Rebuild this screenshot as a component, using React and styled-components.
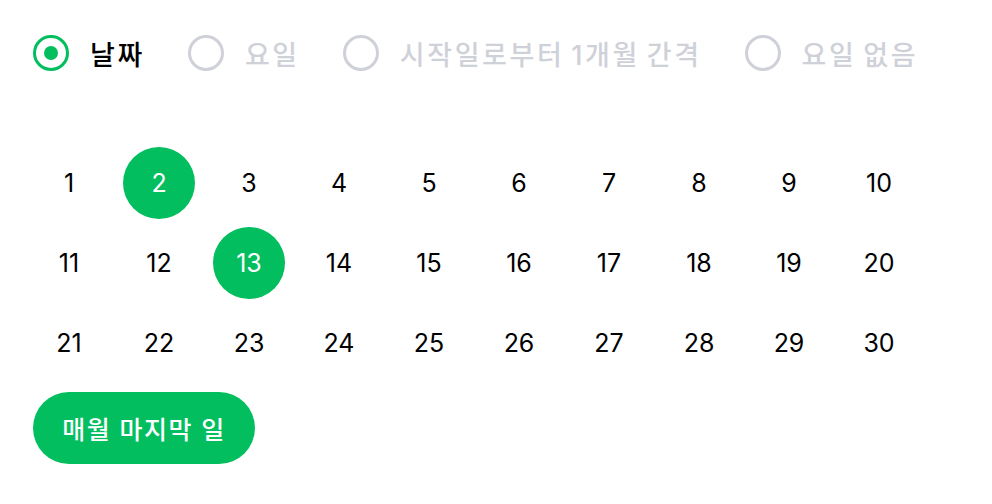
import React from "react";
import styled, { createGlobalStyle } from "styled-components";

const GREEN = "#02BE5F";
const GRAY = "#CFD1D9";

const Global = createGlobalStyle`
  html, body { margin: 0; padding: 0; background: #fff; }
  body { font-family: Inter, "Noto Sans CJK KR", sans-serif; color: #000; }
`;

const Page = styled.div`
  padding: 35px 0 0 33px;
`;

const RadioRow = styled.div`
  display: flex;
  align-items: center;
  gap: 43px;
  height: 36px;
`;

const RadioItem = styled.label`
  display: flex;
  align-items: center;
  gap: 21px;
  font-family: Inter, "Noto Sans CJK KR", sans-serif;
  font-size: 27px;
  letter-spacing: 2.6px;
  word-spacing: -3px;
  font-weight: 500;
  color: ${(p) => (p.$checked ? "#000" : GRAY)};
`;

const Ring = styled.span`
  box-sizing: border-box;
  flex: none;
  width: 36px;
  height: 36px;
  border-radius: 50%;
  border: 3px solid ${(p) => (p.$checked ? GREEN : GRAY)};
  display: flex;
  align-items: center;
  justify-content: center;
  &::after {
    content: "";
    width: 14px;
    height: 14px;
    border-radius: 50%;
    background: ${GREEN};
    display: ${(p) => (p.$checked ? "block" : "none")};
  }
`;

const Grid = styled.div`
  margin-top: 76px;
  display: grid;
  grid-template-columns: repeat(10, 72px);
  grid-auto-rows: 72px;
  column-gap: 18px;
  row-gap: 8px;
`;

const Day = styled.div`
  display: flex;
  align-items: center;
  justify-content: center;
  border-radius: 50%;
  font-size: 25px;
  font-weight: 400;
  background: ${(p) => (p.$selected ? GREEN : "transparent")};
  color: ${(p) => (p.$selected ? "#fff" : "#000")};
`;

const LastDayButton = styled.button`
  margin-top: 13px;
  height: 72px;
  width: 222px;
  border: none;
  border-radius: 36px;
  background: ${GREEN};
  color: #fff;
  font-family: Inter, "Noto Sans CJK KR", sans-serif;
  font-size: 25px;
  letter-spacing: 1.5px;
  font-weight: 500;
  padding: 0;
`;

const options = [
  { label: "날짜", checked: true },
  { label: "요일" },
  { label: "시작일로부터 1개월 간격" },
  { label: "요일 없음" },
];

const selected = new Set([2, 13]);

export default function App() {
  return (
    <>
      <Global />
      <Page>
        <RadioRow>
          {options.map((o) => (
            <RadioItem key={o.label} $checked={o.checked}>
              <Ring $checked={o.checked} />
              {o.label}
            </RadioItem>
          ))}
        </RadioRow>
        <Grid>
          {Array.from({ length: 30 }, (_, i) => i + 1).map((d) => (
            <Day key={d} $selected={selected.has(d)}>
              {d}
            </Day>
          ))}
        </Grid>
        <LastDayButton>매월 마지막 일</LastDayButton>
      </Page>
    </>
  );
}
